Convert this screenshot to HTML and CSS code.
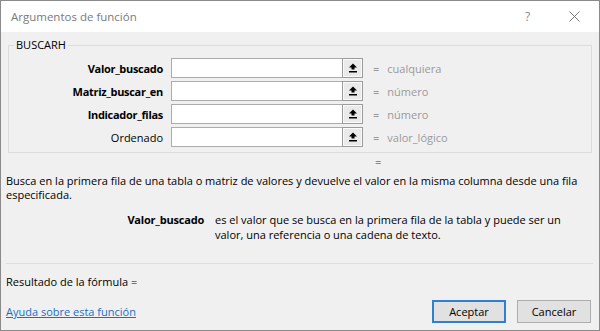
FILE: index.html
```html
<!DOCTYPE html>
<html lang="es">
<head>
<meta charset="utf-8">
<title>Argumentos de función</title>
<link rel="stylesheet" href="styles.css">
</head>
<body>
<div class="window">
  <div class="titlebar">
    <span class="title">Argumentos de función</span>
    <span class="help">?</span>
    <span class="close"><svg width="11" height="11" viewBox="0 0 11 11"><path d="M0.5 0.5 L10.5 10.5 M10.5 0.5 L0.5 10.5" stroke="#7a7a7a" stroke-width="1" fill="none"/></svg></span>
  </div>
  <div class="content">
    <fieldset class="group">
      <legend>BUSCARH</legend>
      <div class="args">
        <label class="lbl bold">Valor_buscado</label>
        <span class="field"></span>
        <span class="pick"><svg width="10" height="10" viewBox="0 0 10 10"><path d="M5 0.5 L9 4.5 L6.5 4.5 L6.5 6.5 L3.5 6.5 L3.5 4.5 L1 4.5 Z" fill="#000"/><rect x="1" y="8" width="8" height="1.5" fill="#000"/></svg></span>
        <span class="eq">=</span>
        <span class="val">cualquiera</span>

        <label class="lbl bold">Matriz_buscar_en</label>
        <span class="field"></span>
        <span class="pick"><svg width="10" height="10" viewBox="0 0 10 10"><path d="M5 0.5 L9 4.5 L6.5 4.5 L6.5 6.5 L3.5 6.5 L3.5 4.5 L1 4.5 Z" fill="#000"/><rect x="1" y="8" width="8" height="1.5" fill="#000"/></svg></span>
        <span class="eq">=</span>
        <span class="val">número</span>

        <label class="lbl bold">Indicador_filas</label>
        <span class="field"></span>
        <span class="pick"><svg width="10" height="10" viewBox="0 0 10 10"><path d="M5 0.5 L9 4.5 L6.5 4.5 L6.5 6.5 L3.5 6.5 L3.5 4.5 L1 4.5 Z" fill="#000"/><rect x="1" y="8" width="8" height="1.5" fill="#000"/></svg></span>
        <span class="eq">=</span>
        <span class="val">número</span>

        <label class="lbl">Ordenado</label>
        <span class="field"></span>
        <span class="pick"><svg width="10" height="10" viewBox="0 0 10 10"><path d="M5 0.5 L9 4.5 L6.5 4.5 L6.5 6.5 L3.5 6.5 L3.5 4.5 L1 4.5 Z" fill="#000"/><rect x="1" y="8" width="8" height="1.5" fill="#000"/></svg></span>
        <span class="eq">=</span>
        <span class="val">valor_lógico</span>
      </div>
    </fieldset>
    <div class="result-eq">=</div>
    <p class="desc">Busca en la primera fila de una tabla o matriz de valores y devuelve el valor en la misma columna desde una fila especificada.</p>
    <div class="argdesc">
      <span class="argname">Valor_buscado</span>
      <span class="argtext">es el valor que se busca en la primera fila de la tabla y puede ser un valor, una referencia o una cadena de texto.</span>
    </div>
    <hr class="sep">
    <div class="footer">
      <div class="footer-left">
        <div class="formula">Resultado de la fórmula =</div>
        <a class="helplink" href="#">Ayuda sobre esta función</a>
      </div>
      <div class="buttons">
        <button class="btn primary">Aceptar</button>
        <button class="btn">Cancelar</button>
      </div>
    </div>
  </div>
</div>
</body>
</html>
```
FILE: styles.css
```css
* { box-sizing: border-box; }
html, body { margin: 0; padding: 0; }
body {
  font-family: "Open Sans", "Noto Sans", sans-serif;
  font-size: 11px;
  color: #000;
  background: #fff;
}
.window {
  width: 600px;
  height: 331px;
  border: 1px solid #8a8a8a;
  background: #f0f0f0;
  display: flex;
  flex-direction: column;
}
.titlebar {
  height: 31px;
  background: #fff;
  display: flex;
  align-items: center;
  padding-left: 10px;
  flex-shrink: 0;
}
.title {
  font-size: 11.5px;
  color: #7a7a7a;
  flex: 1;
  padding-bottom: 1px;
}
.help {
  font-size: 12px;
  color: #8a8a8a;
  width: 10px;
  margin-right: 34px;
}
.close {
  width: 11px;
  height: 11px;
  margin-right: 19px;
  display: flex;
}
.content {
  padding: 0 6px 7px 5px;
  flex: 1;
  display: flex;
  flex-direction: column;
}
.group {
  margin: 6px 1px 0 2px;
  padding: 0 0 5px 0;
  border: 1px solid #dcdcdc;
  min-width: 0;
}
.group legend {
  margin-left: 5px;
  padding: 0 2px;
  line-height: 14px;
  font-size: 11px;
}
.args {
  display: grid;
  grid-template-columns: 154px 179px 21px auto 1fr;
  grid-auto-rows: 20px;
  row-gap: 3px;
  margin-top: 6px;
  align-items: center;
}
.lbl {
  text-align: right;
  white-space: nowrap;
}
.bold { font-weight: 700; letter-spacing: -0.3px; }
.field {
  margin-left: 8px;
  height: 20px;
  background: #fff;
  border: 1px solid #acacac;
  border-right: none;
}
.pick {
  height: 20px;
  border: 1px solid #9c9c9c;
  background: #eaeaea;
  box-shadow: inset 0 0 0 1px #fafafa;
  display: flex;
  align-items: center;
  justify-content: center;
}
.eq {
  color: #555;
  padding-left: 10px;
  padding-right: 8px;
}
.val { color: #9a9a9a; }
.result-eq {
  margin-left: 369px;
  line-height: 14px;
  margin-top: 2px;
  color: #333;
}
.desc {
  margin: 5px 0 0 0;
  line-height: 14px;
}
.argdesc {
  display: flex;
  margin-top: 10px;
  line-height: 15px;
}
.argname {
  width: 198px;
  text-align: right;
  font-weight: 700;
  letter-spacing: -0.2px;
  flex-shrink: 0;
}
.argtext {
  margin-left: 11px;
  width: 360px;
}
.sep {
  margin: 21px 0 0 0;
  border: none;
  border-top: 1px solid #dedede;
  height: 0;
}
.footer {
  margin-top: auto;
  display: flex;
  justify-content: space-between;
  align-items: flex-end;
}
.footer-left {
  margin-bottom: 4px;
}
.formula {
  line-height: 14px;
}
.helplink {
  display: block;
  margin-top: 16px;
  color: #1c6fc0;
  line-height: 14px;
}
.buttons {
  display: flex;
  gap: 11px;
  margin-right: 2px;
}
.btn {
  font-family: inherit;
  font-size: 11px;
  width: 74px;
  height: 23px;
  background: #e1e1e1;
  border: 1px solid #adadad;
  color: #000;
  padding: 0;
}
.btn.primary {
  border: 2px solid #2f7fd3;
}
```
